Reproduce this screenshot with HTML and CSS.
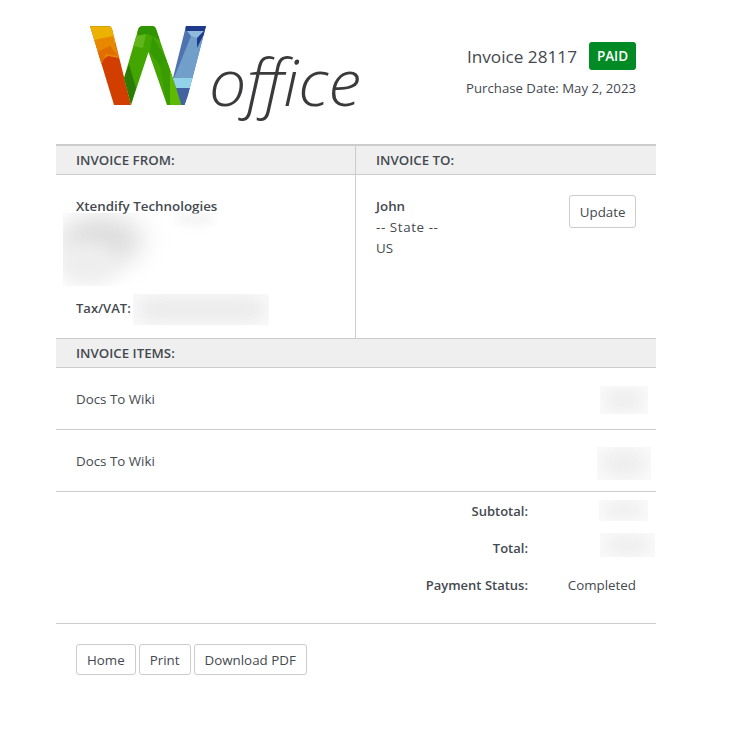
FILE: index.html
```html
<!DOCTYPE html>
<html lang="en">
<head>
<meta charset="utf-8">
<title>Invoice 28117</title>
<link rel="stylesheet" href="styles.css">
</head>
<body>
<main class="invoice">
  <header class="top">
    <svg class="logo" viewBox="86 20 280 110" width="280" height="110" role="img" aria-label="W office">
      <defs>
        <clipPath id="cr"><path d="M90 26H108Q111 26 112 29L131 105H114Z"/></clipPath>
        <clipPath id="cg"><path d="M124 78L138 30Q139 26 143 26H152Q155 26 156 29L182 105H167L148.500 52L131 105Z"/></clipPath>
        <clipPath id="cb"><path d="M186 26H206L188 95L184.500 105H181.500L173 78Z"/></clipPath>
      </defs>
      <g clip-path="url(#cr)">
        <rect x="86" y="20" width="50" height="90" fill="#d23d00"/>
        <path d="M86 20H120V44L94 44Z" fill="#ecb200"/>
        <path d="M86 20H116V27L88 27Z" fill="#d6a200"/>
        <path d="M94 40L113 36L119 58L108 56L100 62Z" fill="#e88700"/>
        <path d="M97 52L110 46L118 56L106 54L101 66Z" fill="#e06e00"/>
      </g>
      <g clip-path="url(#cg)">
        <rect x="120" y="20" width="65" height="90" fill="#43a600"/>
        <path d="M136 24H158L160 40L148 34L138 36Z" fill="#2f9500"/>
        <path d="M136 36L146 34L143 48L133 46Z" fill="#5fb51a"/>
        <path d="M152 36L168 62L160 66L150 52Z" fill="#349a00"/>
        <path d="M124 78L129 64L136 88L131 105Z" fill="#2a7c06"/>
        <path d="M160 66L170 62L176 105H167Z" fill="#3a9c00"/>
        <path d="M170 70L183 105H170Z" fill="#5cba00"/>
      </g>
      <g clip-path="url(#cb)">
        <rect x="170" y="20" width="40" height="90" fill="#4f72b1"/>
        <path d="M191 36L204 36L193 78H174Z" fill="#719fca"/>
        <path d="M187 31H204L197 38L191 36Z" fill="#8fbadc"/>
        <path d="M184 24H208V31L203 36L197 48L197 38L204 31H186Z" fill="#1f3a8b"/>
        <path d="M172 78L194 78L190 88L176 88Z" fill="#93d3ea"/>
        <path d="M176 88L190 88L185 106H180Z" fill="#43629f"/>
      </g>
      <text class="logo-word" x="209" y="106" textLength="152" lengthAdjust="spacingAndGlyphs">office</text>
    </svg>
    <div class="summary">
      <div class="summary-title">
        <span class="invoice-number">Invoice 28117</span>
        <span class="badge">PAID</span>
      </div>
      <p class="purchase-date">Purchase Date: May 2, 2023</p>
    </div>
  </header>

  <section class="parties">
    <h2 class="band band-from">INVOICE FROM:</h2>
    <h2 class="band">INVOICE TO:</h2>
    <div class="party party-from">
      <p class="party-name">Xtendify Technologies</p>
      <div class="redact address"><span class="smudge smudge-a"></span><span class="smudge smudge-d"></span><span class="smudge smudge-b"></span></div>
      <p class="tax"><strong>Tax/VAT:</strong> <span class="redact tax-id"><span class="smudge smudge-c"></span></span></p>
    </div>
    <div class="party party-to">
      <div>
        <p class="party-name">John</p>
        <p class="state">-- State --</p>
        <p>US</p>
      </div>
      <a class="btn btn-update" href="#">Update</a>
    </div>
  </section>

  <section class="items">
    <h2 class="band band-items">INVOICE ITEMS:</h2>
    <div class="item">
      <span>Docs To Wiki</span>
      <span class="redact amount-a"><span class="smudge smudge-fill"></span></span>
    </div>
    <div class="item">
      <span>Docs To Wiki</span>
      <span class="redact amount-b"><span class="smudge smudge-fill"></span></span>
    </div>
  </section>

  <section class="totals">
    <strong>Subtotal:</strong>
    <span class="total-value"><span class="redact amount-c"><span class="smudge smudge-fill"></span></span></span>
    <strong>Total:</strong>
    <span class="total-value"><span class="redact amount-d"><span class="smudge smudge-fill"></span></span></span>
    <strong>Payment Status:</strong>
    <span class="total-value">Completed</span>
  </section>

  <footer class="actions">
    <a class="btn" href="#">Home</a>
    <a class="btn" href="#">Print</a>
    <a class="btn" href="#">Download PDF</a>
  </footer>
</main>
</body>
</html>
```
FILE: styles.css
```css
* { box-sizing: border-box; }
html, body { margin: 0; background: #fff; }
body {
  font-family: "Open Sans", "Liberation Sans", sans-serif;
  font-size: 13.350px;
  line-height: 21px;
  color: #444950;
}
p, h2 { margin: 0; }
strong { font-weight: 600; font-size: 13px; }

.invoice { width: 600px; margin-left: 56px; }

.top { display: flex; justify-content: space-between; height: 144px; }
.logo { display: block; margin: 20px 0 0 30px; }
.logo-word {
  font-family: "Open Sans", sans-serif;
  font-style: italic;
  font-weight: 300;
  font-size: 64px;
  fill: #3a3a3c;
}
.summary { padding: 42px 20px 0 0; text-align: right; }
.summary-title { display: flex; justify-content: flex-end; align-items: center; gap: 12px; height: 28px; }
.invoice-number { font-size: 17.200px; }
.badge {
  width: 47px;
  height: 28px;
  border-radius: 3px;
  background: #028a25;
  color: #fff;
  font-size: 13.500px;
  font-weight: 600;
  line-height: 28px;
  text-align: center;
}
.purchase-date { margin-top: 8px; font-size: 13.200px; }

.parties {
  display: grid;
  grid-template-columns: 300px 300px;
  grid-template-rows: 29px 163px;
  border-top: 2px solid #ccc;
}
.band {
  padding: 0 20px;
  background: #efefef;
  border-bottom: 1px solid #ccc;
  font-size: 13.300px;
  font-weight: 600;
  line-height: 28px;
}
.band-from { border-right: 1px solid #ccc; }
.party { padding: 21px 20px 0; position: relative; }
.party-from { border-right: 1px solid #ccc; }
.party-to { display: flex; justify-content: space-between; align-items: flex-start; }
.party-name { font-weight: 600; }
.state { letter-spacing: 0.600px; }

.redact { display: block; overflow: hidden; position: absolute; background: #fafafa; }
.smudge { display: block; position: absolute; border-radius: 50%; }
.smudge-fill { inset: 2px 4px; background: #eeeeee; filter: blur(7px); }
.address { left: 7px; top: 38px; width: 156px; height: 73px; background: none; }
.smudge-a { left: -4px; top: 2px; width: 84px; height: 50px; background: #dcdcdc; filter: blur(13px); }
.smudge-d { left: -6px; top: 28px; width: 60px; height: 46px; background: #eeeeee; filter: blur(9px); }
.smudge-b { left: 112px; top: 0; width: 40px; height: 12px; background: #f3f3f3; filter: blur(5px); }
.tax { position: absolute; left: 20px; top: 123px; }
.tax-id { position: absolute; left: 57px; top: -4px; width: 136px; height: 31px; }
.smudge-c { inset: 3px 4px; background: #ebebeb; border-radius: 12px; filter: blur(8px); }

.btn {
  display: block;
  padding: 0 10px;
  height: 31px;
  border: 1px solid #ccc;
  border-radius: 3px;
  background: #fff;
  color: #444950;
  line-height: 30px;
  text-decoration: none;
}
.btn-update { height: 33px; padding: 0 9.500px; line-height: 32px; margin-top: -1px; }

.band-items { height: 30px; border-top: 1px solid #ccc; line-height: 28px; }
.item {
  display: flex;
  justify-content: space-between;
  align-items: center;
  position: relative;
  height: 62px;
  padding: 2px 20px 0;
  border-bottom: 1px solid #ccc;
}
.amount-a { right: 8px; top: 18px; width: 48px; height: 28px; }
.amount-b { right: 5px; top: 17px; width: 54px; height: 33px; }

.totals {
  display: grid;
  grid-template-columns: 472px 128px;
  grid-auto-rows: 37px;
  align-items: center;
  padding-top: 1px;
  text-align: right;
}
.total-value { display: block; position: relative; height: 37px; padding-right: 20px; line-height: 37px; }
.amount-c { right: 8px; top: 7px; width: 49px; height: 21px; }
.amount-d { right: 1px; top: 3px; width: 55px; height: 24px; }

.actions {
  display: flex;
  gap: 3px;
  margin-top: 19px;
  padding: 20px 20px 0;
  border-top: 1px solid #ccc;
}
```
